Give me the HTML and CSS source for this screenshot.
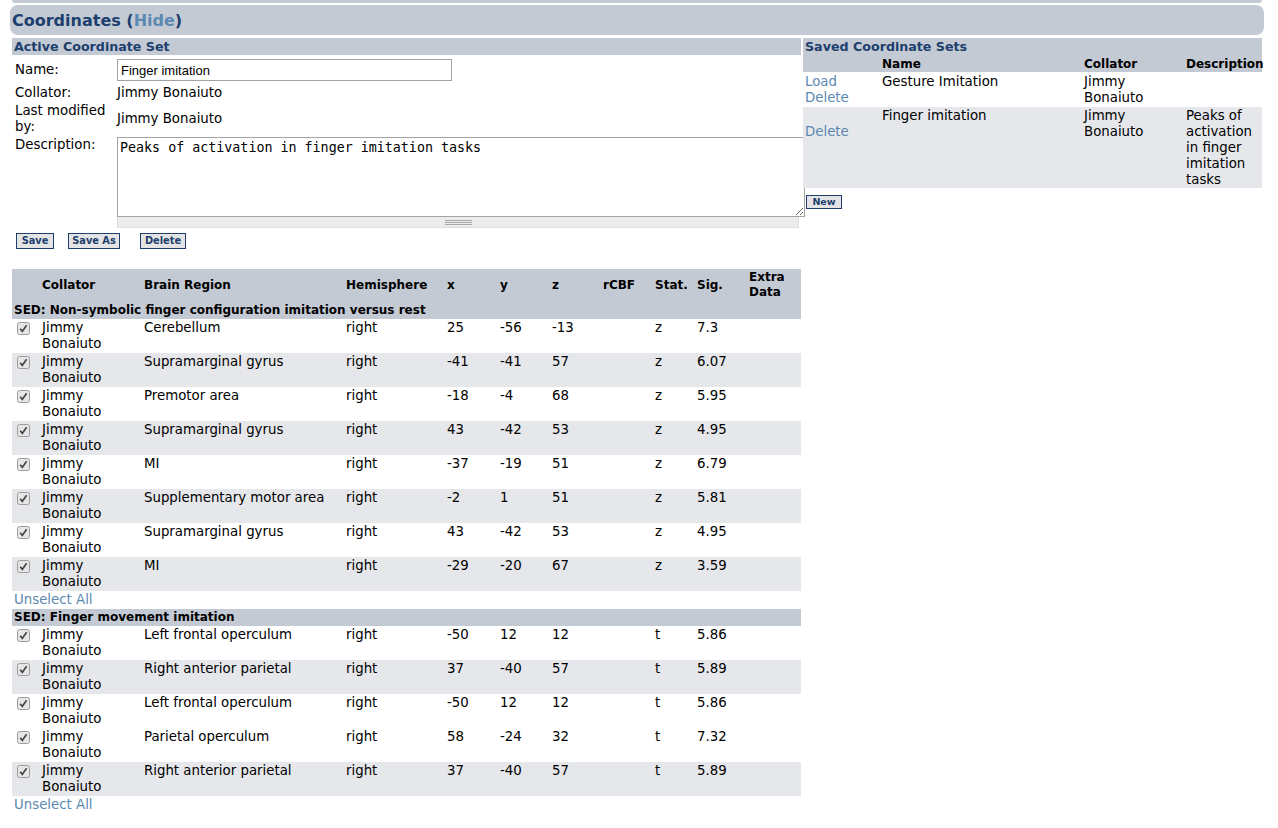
FILE: index.html
```html
<!DOCTYPE html>
<html>
<head>
<meta charset="utf-8">
<link rel="stylesheet" href="styles.css">
</head>
<body>
<div class="page">
  <div class="prev-strip"></div>
  <div class="section-bar"><span class="section-title">Coordinates (<a class="hide-link">Hide</a>)</span></div>
  <div class="columns">
    <div class="left-col">
      <div class="panel-head">Active Coordinate Set</div>
      <table class="form-table">
        <colgroup><col class="f-lbl"><col class="f-val"></colgroup>
        <tr class="row-name"><td class="lbl">Name:</td><td class="val"><input class="name-input" type="text" value="Finger imitation"></td></tr>
        <tr><td class="lbl">Collator:</td><td class="val">Jimmy Bonaiuto</td></tr>
        <tr><td class="lbl">Last modified by:</td><td class="val mid">Jimmy Bonaiuto</td></tr>
        <tr><td class="lbl">Description:</td><td class="val"><textarea class="desc">Peaks of activation in finger imitation tasks</textarea><div class="grip"><span class="grip-lines"></span></div></td></tr>
      </table>
      <div class="btn-row">
        <button class="btn btn-save">Save</button>
        <button class="btn btn-saveas">Save As</button>
        <button class="btn btn-delete">Delete</button>
      </div>

      <table class="coords">
        <colgroup>
          <col class="c-chk"><col class="c-coll"><col class="c-region"><col class="c-hemi"><col class="c-x"><col class="c-y"><col class="c-z"><col class="c-rcbf"><col class="c-stat"><col class="c-sig"><col class="c-extra">
        </colgroup>
        <tr class="head">
          <th></th><th>Collator</th><th>Brain Region</th><th>Hemisphere</th><th>x</th><th>y</th><th>z</th><th>rCBF</th><th>Stat.</th><th>Sig.</th><th>Extra Data</th>
        </tr>
        <tr class="group"><td colspan="11">SED: Non-symbolic finger configuration imitation versus rest</td></tr>
        <tr><td class="chk"><svg width="13" height="13" viewBox="0 0 13 13"><rect x="0.5" y="0.5" width="12" height="12" rx="2" fill="#e6e6e6" stroke="#9c9c9c"/><path d="M3.2 6.8 L5.3 9.4 L9.6 3.2" fill="none" stroke="#444" stroke-width="1.7"/></svg></td><td>Jimmy Bonaiuto</td><td>Cerebellum</td><td>right</td><td>25</td><td>-56</td><td>-13</td><td></td><td>z</td><td>7.3</td><td></td></tr>
        <tr class="alt"><td class="chk"><svg width="13" height="13" viewBox="0 0 13 13"><rect x="0.5" y="0.5" width="12" height="12" rx="2" fill="#e6e6e6" stroke="#9c9c9c"/><path d="M3.2 6.8 L5.3 9.4 L9.6 3.2" fill="none" stroke="#444" stroke-width="1.7"/></svg></td><td>Jimmy Bonaiuto</td><td>Supramarginal gyrus</td><td>right</td><td>-41</td><td>-41</td><td>57</td><td></td><td>z</td><td>6.07</td><td></td></tr>
        <tr><td class="chk"><svg width="13" height="13" viewBox="0 0 13 13"><rect x="0.5" y="0.5" width="12" height="12" rx="2" fill="#e6e6e6" stroke="#9c9c9c"/><path d="M3.2 6.8 L5.3 9.4 L9.6 3.2" fill="none" stroke="#444" stroke-width="1.7"/></svg></td><td>Jimmy Bonaiuto</td><td>Premotor area</td><td>right</td><td>-18</td><td>-4</td><td>68</td><td></td><td>z</td><td>5.95</td><td></td></tr>
        <tr class="alt"><td class="chk"><svg width="13" height="13" viewBox="0 0 13 13"><rect x="0.5" y="0.5" width="12" height="12" rx="2" fill="#e6e6e6" stroke="#9c9c9c"/><path d="M3.2 6.8 L5.3 9.4 L9.6 3.2" fill="none" stroke="#444" stroke-width="1.7"/></svg></td><td>Jimmy Bonaiuto</td><td>Supramarginal gyrus</td><td>right</td><td>43</td><td>-42</td><td>53</td><td></td><td>z</td><td>4.95</td><td></td></tr>
        <tr><td class="chk"><svg width="13" height="13" viewBox="0 0 13 13"><rect x="0.5" y="0.5" width="12" height="12" rx="2" fill="#e6e6e6" stroke="#9c9c9c"/><path d="M3.2 6.8 L5.3 9.4 L9.6 3.2" fill="none" stroke="#444" stroke-width="1.7"/></svg></td><td>Jimmy Bonaiuto</td><td>MI</td><td>right</td><td>-37</td><td>-19</td><td>51</td><td></td><td>z</td><td>6.79</td><td></td></tr>
        <tr class="alt"><td class="chk"><svg width="13" height="13" viewBox="0 0 13 13"><rect x="0.5" y="0.5" width="12" height="12" rx="2" fill="#e6e6e6" stroke="#9c9c9c"/><path d="M3.2 6.8 L5.3 9.4 L9.6 3.2" fill="none" stroke="#444" stroke-width="1.7"/></svg></td><td>Jimmy Bonaiuto</td><td>Supplementary motor area</td><td>right</td><td>-2</td><td>1</td><td>51</td><td></td><td>z</td><td>5.81</td><td></td></tr>
        <tr><td class="chk"><svg width="13" height="13" viewBox="0 0 13 13"><rect x="0.5" y="0.5" width="12" height="12" rx="2" fill="#e6e6e6" stroke="#9c9c9c"/><path d="M3.2 6.8 L5.3 9.4 L9.6 3.2" fill="none" stroke="#444" stroke-width="1.7"/></svg></td><td>Jimmy Bonaiuto</td><td>Supramarginal gyrus</td><td>right</td><td>43</td><td>-42</td><td>53</td><td></td><td>z</td><td>4.95</td><td></td></tr>
        <tr class="alt"><td class="chk"><svg width="13" height="13" viewBox="0 0 13 13"><rect x="0.5" y="0.5" width="12" height="12" rx="2" fill="#e6e6e6" stroke="#9c9c9c"/><path d="M3.2 6.8 L5.3 9.4 L9.6 3.2" fill="none" stroke="#444" stroke-width="1.7"/></svg></td><td>Jimmy Bonaiuto</td><td>MI</td><td>right</td><td>-29</td><td>-20</td><td>67</td><td></td><td>z</td><td>3.59</td><td></td></tr>
        <tr class="unselect"><td colspan="11"><a class="link">Unselect All</a></td></tr>
        <tr class="group"><td colspan="11">SED: Finger movement imitation</td></tr>
        <tr><td class="chk"><svg width="13" height="13" viewBox="0 0 13 13"><rect x="0.5" y="0.5" width="12" height="12" rx="2" fill="#e6e6e6" stroke="#9c9c9c"/><path d="M3.2 6.8 L5.3 9.4 L9.6 3.2" fill="none" stroke="#444" stroke-width="1.7"/></svg></td><td>Jimmy Bonaiuto</td><td>Left frontal operculum</td><td>right</td><td>-50</td><td>12</td><td>12</td><td></td><td>t</td><td>5.86</td><td></td></tr>
        <tr class="alt"><td class="chk"><svg width="13" height="13" viewBox="0 0 13 13"><rect x="0.5" y="0.5" width="12" height="12" rx="2" fill="#e6e6e6" stroke="#9c9c9c"/><path d="M3.2 6.8 L5.3 9.4 L9.6 3.2" fill="none" stroke="#444" stroke-width="1.7"/></svg></td><td>Jimmy Bonaiuto</td><td>Right anterior parietal</td><td>right</td><td>37</td><td>-40</td><td>57</td><td></td><td>t</td><td>5.89</td><td></td></tr>
        <tr><td class="chk"><svg width="13" height="13" viewBox="0 0 13 13"><rect x="0.5" y="0.5" width="12" height="12" rx="2" fill="#e6e6e6" stroke="#9c9c9c"/><path d="M3.2 6.8 L5.3 9.4 L9.6 3.2" fill="none" stroke="#444" stroke-width="1.7"/></svg></td><td>Jimmy Bonaiuto</td><td>Left frontal operculum</td><td>right</td><td>-50</td><td>12</td><td>12</td><td></td><td>t</td><td>5.86</td><td></td></tr>
        <tr><td class="chk"><svg width="13" height="13" viewBox="0 0 13 13"><rect x="0.5" y="0.5" width="12" height="12" rx="2" fill="#e6e6e6" stroke="#9c9c9c"/><path d="M3.2 6.8 L5.3 9.4 L9.6 3.2" fill="none" stroke="#444" stroke-width="1.7"/></svg></td><td>Jimmy Bonaiuto</td><td>Parietal operculum</td><td>right</td><td>58</td><td>-24</td><td>32</td><td></td><td>t</td><td>7.32</td><td></td></tr>
        <tr class="alt"><td class="chk"><svg width="13" height="13" viewBox="0 0 13 13"><rect x="0.5" y="0.5" width="12" height="12" rx="2" fill="#e6e6e6" stroke="#9c9c9c"/><path d="M3.2 6.8 L5.3 9.4 L9.6 3.2" fill="none" stroke="#444" stroke-width="1.7"/></svg></td><td>Jimmy Bonaiuto</td><td>Right anterior parietal</td><td>right</td><td>37</td><td>-40</td><td>57</td><td></td><td>t</td><td>5.89</td><td></td></tr>
        <tr class="unselect"><td colspan="11"><a class="link">Unselect All</a></td></tr>
      </table>
    </div>

    <div class="right-col">
      <table class="saved">
        <colgroup><col class="s-act"><col class="s-name"><col class="s-coll"><col class="s-desc"></colgroup>
        <tr class="saved-title"><td colspan="4">Saved Coordinate Sets</td></tr>
        <tr class="saved-head"><th></th><th>Name</th><th>Collator</th><th>Description</th></tr>
        <tr class="first"><td><a class="link">Load</a><br><a class="link">Delete</a></td><td>Gesture Imitation</td><td>Jimmy Bonaiuto</td><td></td></tr>
        <tr class="alt"><td><span class="invisible">Load</span><br><a class="link">Delete</a></td><td>Finger imitation</td><td>Jimmy Bonaiuto</td><td>Peaks of activation in finger imitation tasks</td></tr>
      </table>
      <div class="new-row"><button class="btn btn-new">New</button></div>
    </div>
  </div>
</div>
</body>
</html>
```

FILE: styles.css
```css
html, body {
  margin: 0;
  padding: 0;
  background: #ffffff;
}
body {
  font-family: "DejaVu Sans", Verdana, sans-serif;
  font-size: 13.33px;
  color: #000;
}
.page {
  padding: 0 14px 0 10px;
  width: 1254px;
}
.prev-strip {
  height: 3px;
  margin: 0 2px;
  background: #c4cad4;
  border-radius: 0 0 5px 5px;
}
.section-bar {
  margin-top: 2px;
  height: 30px;
  background: #c4cad4;
  border-radius: 8px;
  display: flex;
  align-items: center;
  padding-left: 2px;
}
.section-title {
  font-weight: bold;
  font-size: 16px;
  color: #1c3f6e;
}
.hide-link {
  color: #5b89b1;
}
.columns {
  display: flex;
  gap: 2px;
  padding: 3px 2px 0 2px;
  align-items: flex-start;
}
.left-col {
  width: 789px;
  flex: none;
}
.right-col {
  width: 459px;
  flex: none;
}
.panel-head, .saved-title td {
  background: #c4cad4;
  color: #1c3f6e;
  font-weight: bold;
  font-size: 12.67px;
  line-height: 15px;
  padding: 1px 2px;
}
.form-table {
  table-layout: fixed;
  width: 788px;
  border-collapse: separate;
  border-spacing: 0;
  margin: 1px 0 0 1px;
}
.f-lbl { width: 102px; }
.f-val { width: 686px; }
.form-table td {
  vertical-align: top;
  padding: 1px 2px;
  line-height: 16px;
}
.form-table td.mid {
  vertical-align: middle;
}
.row-name td {
  vertical-align: middle;
  padding-top: 3px;
  padding-bottom: 3px;
}
.name-input {
  width: 335px;
  height: 22px;
  box-sizing: border-box;
  border: 1px solid #a3a3a3;
  font-family: "Liberation Sans", Arial, sans-serif;
  font-size: 13px;
  padding: 1px 3px;
  margin: 0;
  color: #000;
}
.desc {
  display: block;
  width: 688px;
  height: 80px;
  box-sizing: border-box;
  border: 1px solid #a3a3a3;
  font-family: "DejaVu Sans Mono", monospace;
  font-size: 13.33px;
  line-height: 16px;
  padding: 2px 2px;
  margin: 0;
  resize: both;
  color: #000;
}
.grip {
  box-sizing: border-box;
  width: 682px;
  height: 11px;
  background: #ececec;
  border: 1px solid #dedede;
  border-top: none;
  display: flex;
  justify-content: center;
  align-items: center;
}
.grip-lines {
  width: 27px;
  height: 5px;
  background: repeating-linear-gradient(#a8a8a8 0, #a8a8a8 1px, transparent 1px, transparent 2px);
}
.btn-row {
  display: flex;
  padding: 4px 0 0 4px;
  height: 32px;
  align-items: flex-start;
}
.btn {
  font-family: "DejaVu Sans", Verdana, sans-serif;
  font-size: 9.8px;
  font-weight: bold;
  color: #1c3f6e;
  background: #e4e4e4;
  border: 1px solid #1c3f6e;
  padding: 0;
  height: 16px;
  line-height: 14px;
  margin: 0;
  text-align: center;
}
.btn-save { width: 38px; }
.btn-saveas { width: 52px; margin-left: 14px; }
.btn-delete { width: 46px; margin-left: 20px; }
.coords {
  width: 789px;
  table-layout: fixed;
  border-collapse: collapse;
  margin-top: 4px;
}
.c-chk { width: 28px; }
.c-coll { width: 102px; }
.c-region { width: 202px; }
.c-hemi { width: 101px; }
.c-x { width: 53px; }
.c-y { width: 52px; }
.c-z { width: 51px; }
.c-rcbf { width: 52px; }
.c-stat { width: 42px; }
.c-sig { width: 52px; }
.c-extra { width: 54px; }
.coords th {
  background: #c4cad4;
  text-align: left;
  font-weight: bold;
  font-size: 12px;
  vertical-align: middle;
  line-height: 15px;
  padding: 1px 2px 2px 2px;
}
.coords td {
  vertical-align: top;
  line-height: 16px;
  padding: 1px 2px;
}
.coords td.chk {
  padding: 3px 0 0 5px;
}
.chk svg {
  display: block;
}
.coords tr.alt td {
  background: #e6e7eb;
}
.coords tr.group td {
  background: #c4cad4;
  font-weight: bold;
  font-size: 12px;
  line-height: 15px;
  padding: 1px 2px 1px 2px;
}
.coords tr.unselect td {
  line-height: 16px;
  padding: 1px 2px 1px 2px;
}
.link {
  color: #5b89b1;
}
.invisible {
  visibility: hidden;
}
.saved {
  width: 459px;
  table-layout: fixed;
  border-collapse: collapse;
}
.s-act { width: 77px; }
.s-name { width: 202px; }
.s-coll { width: 102px; }
.s-desc { width: 78px; }
.saved-head th {
  background: #c4cad4;
  text-align: left;
  font-weight: bold;
  font-size: 12px;
  line-height: 15px;
  padding: 2px 2px 0 2px;
}
.saved td {
  vertical-align: top;
  line-height: 16px;
  padding: 1px 2px 0 2px;
}
.saved tr.first td {
  padding-top: 2px;
  padding-bottom: 1px;
}
.saved tr.alt td {
  background: #e6e7eb;
}
.new-row {
  padding: 5px 0 0 3px;
}
.btn-new {
  width: 36px;
  height: 14px;
  line-height: 12px;
  font-size: 9.5px;
}
```
